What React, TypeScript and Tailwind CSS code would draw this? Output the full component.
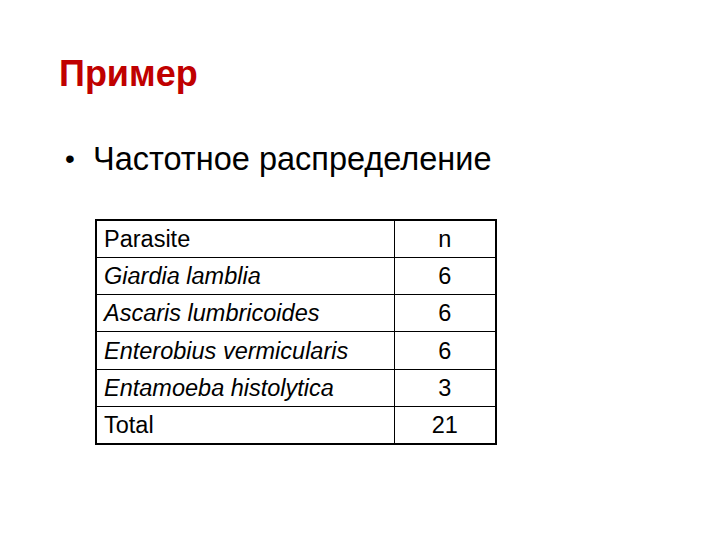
const rows: { name: string; n: string; italic: boolean }[] = [
  { name: "Parasite", n: "n", italic: false },
  { name: "Giardia lamblia", n: "6", italic: true },
  { name: "Ascaris lumbricoides", n: "6", italic: true },
  { name: "Enterobius vermicularis", n: "6", italic: true },
  { name: "Entamoeba histolytica", n: "3", italic: true },
  { name: "Total", n: "21", italic: false },
]

export default function App() {
  return (
    <div className="w-[720px] h-[540px] bg-white overflow-hidden font-['Liberation_Sans',Arial,sans-serif] text-black">
      <div className="pl-[59px] pt-[54px]">
        <h1 className="text-[36px] leading-[40px] font-bold text-[#c00000]">Пример</h1>
      </div>

      <div className="flex items-center pl-[65px] pt-[47px]">
        <span className="text-[28px] leading-none w-[28px]">•</span>
        <span className="text-[32.5px] leading-[36px]">Частотное распределение</span>
      </div>

      <div className="pl-[95px] pt-[42px]">
        <table className="border-collapse border-2 border-black w-[402px]">
          <tbody>
            {rows.map((r) => (
              <tr key={r.name} className="h-[37.3px]">
                <td
                  className={`border border-black w-[298px] pl-[7px] pt-[2px] text-[23.5px] leading-none ${r.italic ? "italic" : ""}`}
                >
                  {r.name}
                </td>
                <td className="border border-black text-center pt-[2px] text-[23.5px] leading-none">{r.n}</td>
              </tr>
            ))}
          </tbody>
        </table>
      </div>
    </div>
  )
}
